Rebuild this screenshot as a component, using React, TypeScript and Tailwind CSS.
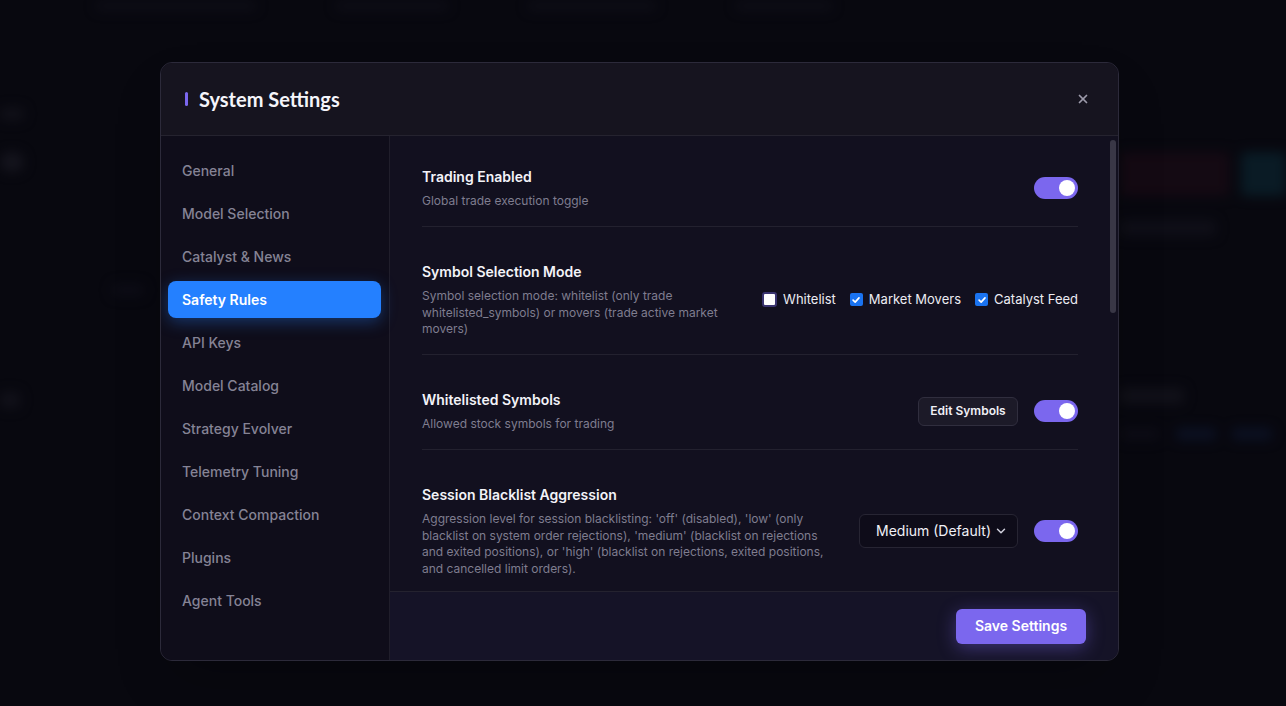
import { ChevronDown, X } from 'lucide-react';

const navItems = [
  'General',
  'Model Selection',
  'Catalyst & News',
  'Safety Rules',
  'API Keys',
  'Model Catalog',
  'Strategy Evolver',
  'Telemetry Tuning',
  'Context Compaction',
  'Plugins',
  'Agent Tools',
];

function Toggle() {
  return (
    <div className="flex h-[22px] w-11 shrink-0 items-center justify-end rounded-full bg-[#7b67ee] px-[3px]">
      <div className="h-4 w-4 rounded-full bg-white" />
    </div>
  );
}

function Check({ checked, label }: { checked: boolean; label: string }) {
  return (
    <label className="flex items-center gap-[6px] text-[13px] text-[#ececf3]">
      {checked ? (
        <span className="flex h-[13px] w-[13px] items-center justify-center rounded-[2px] bg-[#1a73f0]">
          <svg viewBox="0 0 12 12" className="h-[10px] w-[10px]" fill="none" stroke="white" strokeWidth="2" strokeLinecap="round" strokeLinejoin="round">
            <path d="M2.5 6.2 5 8.6 9.6 3.4" />
          </svg>
        </span>
      ) : (
        <span className="h-[15px] w-[15px] rounded-[3px] border-2 border-[#3a3470] bg-white" />
      )}
      {label}
    </label>
  );
}

function Row({ title, desc, children }: { title: string; desc: string; children: React.ReactNode }) {
  return (
    <div className="flex items-center gap-6 border-b border-[#23212f] pb-[16.5px] pt-[19px]">
      <div className="min-w-0 flex-1">
        <div className="text-sm font-semibold leading-5 text-[#f3f3f8]">{title}</div>
        <div className="mt-[6px] text-xs leading-[16.5px] text-[#7f7d8f]">{desc}</div>
      </div>
      <div className="flex shrink-0 items-center gap-4">{children}</div>
    </div>
  );
}

function Backdrop() {
  // faux dashboard behind the modal, blurred out
  return (
    <div className="flex h-full w-full flex-col blur-[6px]">
      <div className="flex h-3 items-center gap-20 px-24">
        <div className="h-2 w-40 rounded bg-[#1c1b28]" />
        <div className="h-2 w-28 rounded bg-[#1c1b28]" />
        <div className="h-2 w-32 rounded bg-[#1c1b28]" />
        <div className="h-2 w-24 rounded bg-[#1c1b28]" />
      </div>
      <div className="flex flex-1">
        <div className="flex w-40 flex-col gap-8 pt-24">
          <div className="h-3 w-6 rounded bg-[#22212c]" />
          <div className="h-5 w-6 rounded-full bg-[#2a2935]" />
          <div className="mt-20 ml-28 h-3 w-8 rounded bg-[#181724]" />
          <div className="mt-16 h-4 w-5 rounded bg-[#22212c]" />
        </div>
        <div className="flex-1" />
        <div className="flex w-[166px] flex-col gap-6 pt-[140px]">
          <div className="flex gap-3">
            <div className="h-11 w-[118px] rounded bg-[#2a0f1c]" />
            <div className="h-11 w-12 rounded bg-[#0f3b4a]" />
          </div>
          <div className="h-4 w-24 rounded bg-[#1d1c28]" />
          <div className="mt-32 h-4 w-16 rounded bg-[#22212c]" />
          <div className="flex gap-4">
            <div className="h-3 w-10 rounded bg-[#181724]" />
            <div className="h-3 w-10 rounded bg-[#132145]" />
            <div className="h-3 w-10 rounded bg-[#132145]" />
          </div>
        </div>
      </div>
    </div>
  );
}

export default function App() {
  return (
    <div className="relative h-[706px] w-[1286px] overflow-hidden bg-[#0a0a12]" style={{ fontFamily: 'Inter, "Noto Sans", sans-serif' }}>
      <Backdrop />
      <div className="absolute inset-0 flex items-center justify-center bg-[#07070d]/60">
        <div className="mr-[7px] mt-[17px] flex h-[599px] w-[959px] flex-col overflow-hidden rounded-xl border border-[#2c2a3a] bg-[#12101f] shadow-2xl">
          <div className="flex h-[73px] shrink-0 items-center justify-between border-b border-[#25232f] bg-[#16141f] pl-6 pr-[28px]">
            <div className="flex items-center gap-[11px]">
              <div className="h-[14px] w-[3px] rounded-full bg-[#7b67ee]" />
              <h1 className="text-xl font-bold text-[#f5f5fa]" style={{ fontFamily: 'Lato, Inter, sans-serif' }}>
                System Settings
              </h1>
            </div>
            <X className="h-[14px] w-[14px] text-[#9c9aaa]" strokeWidth={3} />
          </div>

          <div className="flex min-h-0 flex-1">
            <nav className="flex w-[229px] shrink-0 flex-col gap-[6px] border-r border-[#201e2b] bg-[#0f0d1a] pl-[7px] pr-2 pt-4">
              {navItems.map((item) =>
                item === 'Safety Rules' ? (
                  <div
                    key={item}
                    className="flex h-[37px] items-center rounded-lg bg-[#2480ff] px-[14px] text-sm font-semibold text-white shadow-[0_4px_16px_rgba(36,128,255,0.35)]"
                  >
                    {item}
                  </div>
                ) : (
                  <div key={item} className="flex h-[37px] items-center px-[14px] text-sm font-medium text-[#858395]">
                    {item}
                  </div>
                )
              )}
            </nav>

            <div className="flex min-w-0 flex-1 flex-col">
              <div className="relative min-h-0 flex-1 overflow-hidden">
                <div className="flex flex-col gap-4 pl-8 pr-10 pt-3">
                  <Row title="Trading Enabled" desc="Global trade execution toggle">
                    <Toggle />
                  </Row>
                  <Row
                    title="Symbol Selection Mode"
                    desc="Symbol selection mode: whitelist (only trade whitelisted_symbols) or movers (trade active market movers)"
                  >
                    <div className="flex items-center gap-[14px]">
                      <Check checked={false} label="Whitelist" />
                      <Check checked label="Market Movers" />
                      <Check checked label="Catalyst Feed" />
                    </div>
                  </Row>
                  <Row title="Whitelisted Symbols" desc="Allowed stock symbols for trading">
                    <button className="h-[29px] w-[100px] rounded-md border border-[#302e3e] bg-[#1c1a28] text-xs font-semibold text-[#f0f0f6]">
                      Edit Symbols
                    </button>
                    <Toggle />
                  </Row>
                  <Row
                    title="Session Blacklist Aggression"
                    desc="Aggression level for session blacklisting: 'off' (disabled), 'low' (only blacklist on system order rejections), 'medium' (blacklist on rejections and exited positions), or 'high' (blacklist on rejections, exited positions, and cancelled limit orders)."
                  >
                    <div className="flex h-[34px] w-[159px] items-center justify-between rounded-md border border-[#272533] bg-[#0e0c19] pl-4 pr-[9px] text-sm text-[#f0f0f6]">
                      Medium (Default)
                      <ChevronDown className="h-[14px] w-[14px] text-[#d0d0dc]" strokeWidth={2.5} />
                    </div>
                    <Toggle />
                  </Row>
                </div>
                <div className="absolute right-[2px] top-1 h-[173px] w-[6px] rounded-full bg-[#393746]" />
              </div>
              <div className="flex h-[69px] shrink-0 items-center justify-end border-t border-[#24222f] bg-[#151327] pr-8">
                <button className="h-[35px] w-[130px] rounded-md bg-[#7b67ee] text-sm font-semibold text-white shadow-[0_4px_18px_rgba(123,103,238,0.4)]">
                  Save Settings
                </button>
              </div>
            </div>
          </div>
        </div>
      </div>
    </div>
  );
}
